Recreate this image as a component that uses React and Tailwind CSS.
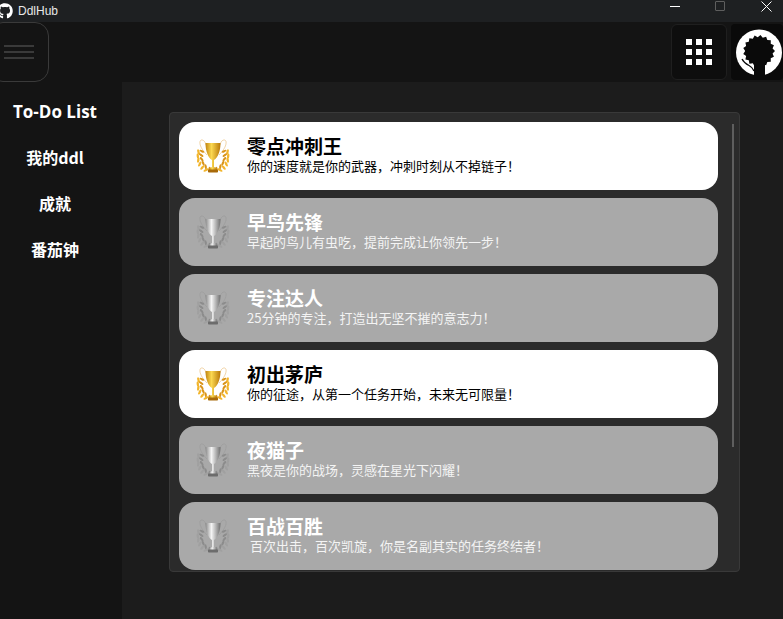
import React from "react";
import { FaGithub } from "react-icons/fa";

const achievements = [
  { t: "零点冲刺王", d: "你的速度就是你的武器，冲刺时刻从不掉链子！", on: true },
  { t: "早鸟先锋", d: "早起的鸟儿有虫吃，提前完成让你领先一步！" },
  { t: "专注达人", d: "25分钟的专注，打造出无坚不摧的意志力！" },
  { t: "初出茅庐", d: "你的征途，从第一个任务开始，未来无可限量！", on: true },
  { t: "夜猫子", d: "黑夜是你的战场，灵感在星光下闪耀！" },
  { t: "百战百胜", d: "\u00a0百次出击，百次凯旋，你是名副其实的任务终结者！" },
];

function Trophy({ on }) {
  const id = on ? "g" : "s";
  const leaf = on ? "#f2b52c" : "#a0a0a0";
  const leafDark = on ? "#d9941a" : "#8c8c8c";
  const stroke = on ? "#e0a850" : "#979797";
  const pts = [
    [2.5, 14, 75], [1.8, 18, 85], [2.3, 22, 100], [3.8, 26, 115], [6.3, 29.5, 130], [10, 32, 150],
  ];
  return (
    <svg width="34" height="36" viewBox="0 0 34 36" className="shrink-0">
      <defs>
        <linearGradient id={id} x1="0" x2="1" y1="0" y2="0">
          <stop offset="0" stopColor={on ? "#c08410" : "#8a8a8a"} />
          <stop offset="0.4" stopColor={on ? "#fbd850" : "#f4f4f4"} />
          <stop offset="1" stopColor={on ? "#b87808" : "#707070"} />
        </linearGradient>
      </defs>
      <path d="M10 7C9 2 5 0.500 4 3.500C3.300 7 6 12 11 17" fill="none" stroke={stroke} strokeWidth="0.5" />
      <path d="M24 7C25 2 29 0.500 30 3.500C30.700 7 28 12 23 17" fill="none" stroke={stroke} strokeWidth="0.5" />
      {pts.map(([x, y, r], i) => (
        <g key={i}>
          <ellipse cx={x} cy={y} rx="2.800" ry="1.200" fill={leaf} transform={`rotate(${r} ${x} ${y})`} />
          <ellipse cx={x + 3.400} cy={y - 0.800} rx="2.600" ry="1.100" fill={leafDark} transform={`rotate(${r - 50} ${x + 3.400} ${y - 0.800})`} />
          <ellipse cx={34 - x} cy={y} rx="2.800" ry="1.200" fill={leaf} transform={`rotate(${-r} ${34 - x} ${y})`} />
          <ellipse cx={30.600 - x} cy={y - 0.800} rx="2.600" ry="1.100" fill={leafDark} transform={`rotate(${50 - r} ${30.600 - x} ${y - 0.800})`} />
        </g>
      ))}
      <path d="M9.500 5H24.500C24.500 13 22 19.500 18 22V29H16V22C12 19.500 9.500 13 9.500 5Z" fill={`url(#${id})`} />
      <path d="M13 32C13 30 15 29 17 29C19 29 21 30 21 32Z" fill={`url(#${id})`} />
      <rect x="12" y="31.500" width="10" height="3" rx="0.800" fill={on ? "#a86a0a" : "#6c6c6c"} />
    </svg>
  );
}

function crownPath() {
  const n = 34;
  let d = "";
  for (let i = 0; i < n; i++) {
    const a = (i / n) * Math.PI * 2;
    const r = i % 2 ? 13.8 : 16;
    d += `${i ? "L" : "M"}${(23 + Math.cos(a) * r).toFixed(2)} ${(22 + Math.sin(a) * r).toFixed(2)}`;
  }
  return d + "Z";
}

function Avatar() {
  return (
    <svg width="46" height="47" viewBox="0 0 46 47">
      <circle cx="23" cy="23.500" r="23" fill="#fff" />
      <path d={crownPath()} fill="#0a0a0a" />
      <path d="M18 32H29V47H18Z" fill="#0a0a0a" />
      <path d="M6 30C8 34 10 35 13 36.500C15 37.500 17 39 18 42" fill="none" stroke="#0a0a0a" strokeWidth="1.300" />
    </svg>
  );
}

export default function App() {
  return (
    <div className="w-[783px] h-[619px] overflow-hidden flex flex-col bg-[#1c1c1c] text-white" style={{ fontFamily: '"Noto Sans CJK SC", "Liberation Sans", sans-serif' }}>
      <div className="h-[22px] shrink-0 bg-[#1e2022] flex items-center overflow-hidden">
        <FaGithub className="ml-[-3px] text-[16px] text-white" />
        <span className="ml-[5px] text-[12px] text-[#e8e8e8]" style={{ fontFamily: '"Liberation Sans", sans-serif' }}>DdlHub</span>
        <div className="ml-auto mr-[-6px] self-start h-[12px] flex items-center">
          <div className="w-[46px] flex justify-center pl-[2px]"><div className="w-[10px] h-px bg-white" /></div>
          <div className="w-[46px] flex justify-center"><div className="w-[10px] h-[10px] border border-[#5e5e5e] rounded-[1px]" /></div>
          <div className="w-[46px] flex justify-center">
            <svg width="11" height="11" viewBox="0 0 11 11"><path d="M0.500 0.500L10.500 10.500M10.500 0.500L0.500 10.500" stroke="#fff" strokeWidth="1" /></svg>
          </div>
        </div>
      </div>
      <div className="h-[60px] shrink-0 bg-[#141414] flex items-center">
        <div className="w-[60px] h-[60px] ml-[-11px] rounded-[14px] border border-[#3a3a3a] flex flex-col items-center justify-center gap-[4px]">
          <div className="w-[30px] h-[2px] bg-[#3a3a3a]" />
          <div className="w-[30px] h-[2px] bg-[#3a3a3a]" />
          <div className="w-[30px] h-[2px] bg-[#3a3a3a]" />
        </div>
        <div className="ml-auto w-[56px] h-[56px] rounded-[6px] border border-[#1f1f1f] bg-[#0e0e0e] grid grid-cols-3 gap-[4px] content-center justify-center px-[14px]">
          {Array.from({ length: 9 }).map((_, i) => <div key={i} className="w-[6px] h-[6px] bg-white justify-self-center" />)}
        </div>
        <div className="ml-[4px] w-[52px] h-[56px] rounded-[4px] bg-[#0a0a0a] flex items-center justify-center pl-[4px] overflow-hidden">
          <Avatar />
        </div>
      </div>
      <div className="flex-1 flex min-h-0">
        <nav className="w-[122px] shrink-0 bg-[#141414] flex flex-col items-center pt-[19px] gap-[24px] pr-[12px] text-[16px] font-bold leading-[22px]">
          <span className="text-[17px] mb-[-1px]" style={{ fontFamily: '"Open Sans", "Noto Sans CJK SC", sans-serif' }}>To-Do List</span>
          <span>我的ddl</span>
          <span>成就</span>
          <span>番茄钟</span>
        </nav>
        <main className="flex-1 pl-[47px] pt-[30px]">
          <div className="relative w-[571px] h-[460px] bg-[#2b2b2b] border border-[#393939] rounded-[4px] overflow-hidden pl-[9px] pt-[9px] flex flex-col gap-[8px]">
            {achievements.map((a) => (
              <div key={a.t} className={`w-[539px] h-[68px] shrink-0 rounded-[16px] flex items-center pl-[17px] ${a.on ? "bg-white text-black" : "bg-[#a9a9a9] text-white"}`}>
                <Trophy on={a.on} />
                <div className="ml-[17px] flex flex-col">
                  <span className="text-[19px] font-bold leading-[20px]">{a.t}</span>
                  <span className={`text-[13px] leading-[20px] ${a.on ? "text-black" : "text-[#f4f4f4]"}`}>{a.d}</span>
                </div>
              </div>
            ))}
            <div className="absolute top-[11px] right-[5px] w-[2px] h-[323px] bg-[#5e5e5e]" />
          </div>
        </main>
      </div>
    </div>
  );
}
